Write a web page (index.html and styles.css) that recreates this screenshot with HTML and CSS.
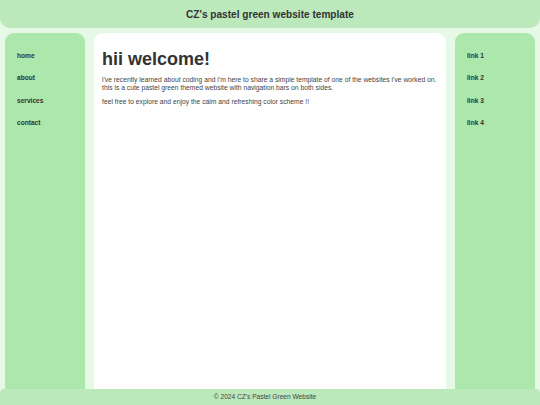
FILE: index.html
```html
<!DOCTYPE html>
<html>
<head>
<meta charset="utf-8">
<title>CZ's pastel green website template</title>
<link rel="stylesheet" href="styles.css">
</head>
<body>
<header class="site-header">
  <h1 class="site-title">CZ's pastel green website template</h1>
</header>
<div class="layout">
  <nav class="sidebar">
    <ul class="nav-list">
      <li><a href="#">home</a></li>
      <li><a href="#">about</a></li>
      <li><a href="#">services</a></li>
      <li><a href="#">contact</a></li>
    </ul>
  </nav>
  <main class="content">
    <h2 class="welcome">hii welcome!</h2>
    <p class="text">i've recently learned about coding and i'm here to share a simple template of one of the websites i've worked on. this is a cute pastel green themed website with navigation bars on both sides.</p>
    <p class="text">feel free to explore and enjoy the calm and refreshing color scheme !!</p>
  </main>
  <nav class="sidebar">
    <ul class="nav-list">
      <li><a href="#">link 1</a></li>
      <li><a href="#">link 2</a></li>
      <li><a href="#">link 3</a></li>
      <li><a href="#">link 4</a></li>
    </ul>
  </nav>
</div>
<footer class="site-footer">© 2024 CZ's Pastel Green Website</footer>
</body>
</html>
```
FILE: styles.css
```css
html, body {
  margin: 0;
  padding: 0;
}
body {
  background: #e6f9e6;
  font-family: "Liberation Sans", Arial, sans-serif;
  color: #333;
  overflow: hidden;
  height: 405px;
}
.site-header {
  background: #bce9bc;
  height: 28px;
  display: flex;
  align-items: center;
  justify-content: center;
  border-radius: 0 0 10px 10px;
}
.site-title {
  margin: 0;
  font-size: 10.1px;
  font-weight: bold;
  color: #333;
}
.layout {
  display: flex;
  gap: 9px;
  padding: 5px 5px 0 5px;
  height: 377px;
  box-sizing: border-box;
}
.sidebar {
  width: 80px;
  flex: none;
  background: #ace7ac;
  border-radius: 9px;
  padding: 15px 12px 0 12px;
  box-sizing: border-box;
}
.nav-list {
  list-style: none;
  margin: 0;
  padding: 0;
}
.nav-list li {
  height: 10px;
  line-height: 10px;
  margin-bottom: 12.3px;
}
.nav-list a {
  font-size: 6.6px;
  font-weight: bold;
  color: #333;
  text-decoration: none;
}
.content {
  flex: 1;
  background: #ffffff;
  border-radius: 9px;
  padding: 16px 4px 0 8px;
}
.welcome {
  margin: 0 0 6px 0;
  font-size: 18px;
  line-height: 21px;
  font-weight: bold;
  color: #333;
}
.text {
  margin: 0 0 6px 0;
  font-size: 6.75px;
  line-height: 8px;
  color: #444;
}
.site-footer {
  position: fixed;
  left: 0;
  right: 0;
  bottom: 0;
  height: 16px;
  line-height: 16px;
  background: #bce9bc;
  text-align: center;
  font-size: 6.6px;
  color: #444;
  padding-right: 10px;
  border-radius: 4px 4px 0 0;
}
```
